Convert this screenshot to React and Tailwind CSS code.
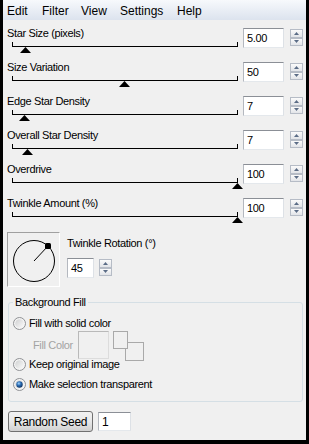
import { useState } from 'react'

const rows = [
  { label: 'Star Size (pixels)', value: '5.00', thumb: 25 },
  { label: 'Size Variation', value: '50', thumb: 124 },
  { label: 'Edge Star Density', value: '7', thumb: 24 },
  { label: 'Overall Star Density', value: '7', thumb: 27 },
  { label: 'Overdrive', value: '100', thumb: 237 },
  { label: 'Twinkle Amount (%)', value: '100', thumb: 237 },
]

const menu = [
  { name: 'Edit', w: 'w-[35px]' },
  { name: 'Filter', w: 'w-[39px]' },
  { name: 'View', w: 'w-[39px]' },
  { name: 'Settings', w: 'w-[57px]' },
  { name: 'Help', w: 'w-[40px]' },
]

function Spinner({ className = '' }) {
  return (
    <div className={`flex w-[13px] flex-col ${className}`}>
      {['up', 'down'].map((dir) => (
        <div
          key={dir}
          className="flex h-[8.5px] items-center justify-center border border-[#b6bcc6] bg-gradient-to-b from-[#fbfbfb] to-[#e2e4e8]"
        >
          <svg width="5" height="3" viewBox="0 0 5 3">
            {dir === 'up' ? (
              <polygon points="2.5,0 5,3 0,3" fill="#5b6c86" />
            ) : (
              <polygon points="0,0 5,0 2.5,3" fill="#5b6c86" />
            )}
          </svg>
        </div>
      ))}
    </div>
  )
}

function NumberBox({ value, className = '' }) {
  return (
    <div
      className={`flex items-center border border-t-[#8b8f96] border-l-[#b4b8bf] border-r-[#dde1e6] border-b-[#e4e8ec] bg-white pl-[3px] leading-none ${className}`}
    >
      {value}
    </div>
  )
}

function SliderRow({ label, value, thumb }) {
  return (
    <div className="flex h-[34px] items-start pl-[4px]">
      <div className="w-[236px]">
        <div className="h-[14px] leading-[14px]">{label}</div>
        <div className="relative h-[20px]">
          <div className="absolute left-[5px] top-[6px] h-px w-[226px] bg-black" />
          <div className="absolute left-[5px] top-[2px] h-[5px] w-px bg-black" />
          <div className="absolute left-[230px] top-[2px] h-[5px] w-px bg-black" />
          <svg
            className="absolute top-[7px]"
            style={{ left: thumb - 7 - 5 }}
            width="11"
            height="6"
            viewBox="0 0 11 6"
          >
            <polygon points="5.5,0 11,6 0,6" fill="black" />
          </svg>
        </div>
      </div>
      <NumberBox value={value} className="mt-[2px] h-[20px] w-[41px]" />
      <Spinner className="ml-[6px] mt-[3px]" />
    </div>
  )
}

function Radio({ checked, id }) {
  return (
    <svg width="13" height="13" viewBox="0 0 13 13">
      <defs>
        <linearGradient id={`rf${id}`} x1="0" y1="0" x2="1" y2="1">
          <stop offset="0" stopColor="#cfd0d1" />
          <stop offset="1" stopColor="#fbfbfb" />
        </linearGradient>
        <radialGradient id={`rd${id}`} cx="0.4" cy="0.35" r="0.7">
          <stop offset="0" stopColor="#9fd3ff" />
          <stop offset="0.45" stopColor="#2a6cb3" />
          <stop offset="1" stopColor="#0b2d5a" />
        </radialGradient>
      </defs>
      <circle cx="6.5" cy="6.5" r="6" fill="#f4f4f4" stroke="#8f9194" />
      <circle cx="6.5" cy="6.5" r="4.3" fill={`url(#rf${id})`} />
      {checked ? <circle cx="6.5" cy="6.5" r="3.2" fill={`url(#rd${id})`} /> : null}
    </svg>
  )
}

function RadioRow({ label, checked, id, onSelect, className = '' }) {
  return (
    <div className={`flex h-[16px] cursor-default items-center pl-[4px] ${className}`} onClick={onSelect}>
      <Radio checked={checked} id={id} />
      <span className="ml-[3px] leading-[14px]">{label}</span>
    </div>
  )
}

export default function App() {
  const [fill, setFill] = useState('transparent')

  return (
    <div className="flex h-[444px] w-[309px] bg-black font-['Liberation_Sans',Arial,sans-serif] text-[11px] tracking-[-0.35px] text-black">
      <div className="ml-[3px] flex h-[440px] w-[303px] flex-col bg-[#f0f0f0]">
        <div className="flex h-[20px] items-center bg-gradient-to-b from-[#f7f9fc] to-[#dce3ee] pl-[4px] pt-[1px] text-[12px] tracking-normal">
          {menu.map((item) => (
            <span key={item.name} className={item.w}>
              {item.name}
            </span>
          ))}
        </div>

        <div className="pt-[6px]">
          {rows.map((row) => (
            <SliderRow key={row.label} {...row} />
          ))}
        </div>

        <div className="mt-[2px] flex pl-[4px]">
          <div className="h-[55px] w-[53px] border border-t-[#a0a0a0] border-l-[#a0a0a0] border-r-[#ffffff] border-b-[#ffffff]">
            <svg width="51" height="53" viewBox="0 0 51 53">
              <circle cx="26" cy="28" r="20.5" fill="none" stroke="black" />
              <line x1="26" y1="28" x2="40" y2="13" stroke="black" />
              <rect x="37" y="10" width="6" height="6" rx="1.5" fill="black" />
            </svg>
          </div>
          <div className="ml-[7px] flex flex-col">
            <div className="mt-[4px] h-[14px] leading-[14px]">Twinkle Rotation (°)</div>
            <div className="mt-[8px] flex items-start">
              <NumberBox value="45" className="h-[20px] w-[27px]" />
              <Spinner className="ml-[5px] mt-[1px]" />
            </div>
          </div>
        </div>

        <fieldset className="ml-[5px] mr-[3px] mt-[8px] rounded-[3px] border border-[#d5dfe5] pb-[9px]">
          <legend className="ml-[4px] px-[2px] leading-[14px]">Background Fill</legend>
          <RadioRow
            id="solid"
            label="Fill with solid color"
            checked={fill === 'solid'}
            onSelect={() => setFill('solid')}
            className="mt-[6px]"
          />
          <div className="flex h-[25px] items-start">
            <span className="mt-[7px] w-[69px] pl-[24px] leading-[14px] text-[#a3a3a3]">Fill Color</span>
            <div className="h-[28px] w-[31px] border border-t-[#b9b9b9] border-l-[#b9b9b9] border-r-[#dcdcdc] border-b-[#dcdcdc]" />
            <svg className="ml-[4px]" width="31" height="31" viewBox="0 0 31 31">
              <rect x="12.5" y="11.5" width="18" height="18" fill="#f0f0f0" stroke="#a9a9a9" />
              <rect x="0.5" y="0.5" width="14" height="17" fill="#f0f0f0" stroke="#a9a9a9" />
            </svg>
          </div>
          <RadioRow
            id="keep"
            label="Keep original image"
            checked={fill === 'keep'}
            onSelect={() => setFill('keep')}
          />
          <RadioRow
            id="transparent"
            label="Make selection transparent"
            checked={fill === 'transparent'}
            onSelect={() => setFill('transparent')}
            className="mt-[4px]"
          />
        </fieldset>

        <div className="mt-[9px] flex items-start pl-[5px]">
          <button
            type="button"
            className="flex h-[21px] w-[85px] items-center justify-center rounded-[3px] border border-[#707070] bg-gradient-to-b from-[#f2f2f2] via-[#e8e8e8] to-[#d0d0d0] text-[12px] tracking-[-0.3px]"
          >
            Random Seed
          </button>
          <NumberBox value="1" className="ml-[5px] mt-[1px] h-[19px] w-[33px] text-[12px]" />
        </div>
      </div>
    </div>
  )
}
